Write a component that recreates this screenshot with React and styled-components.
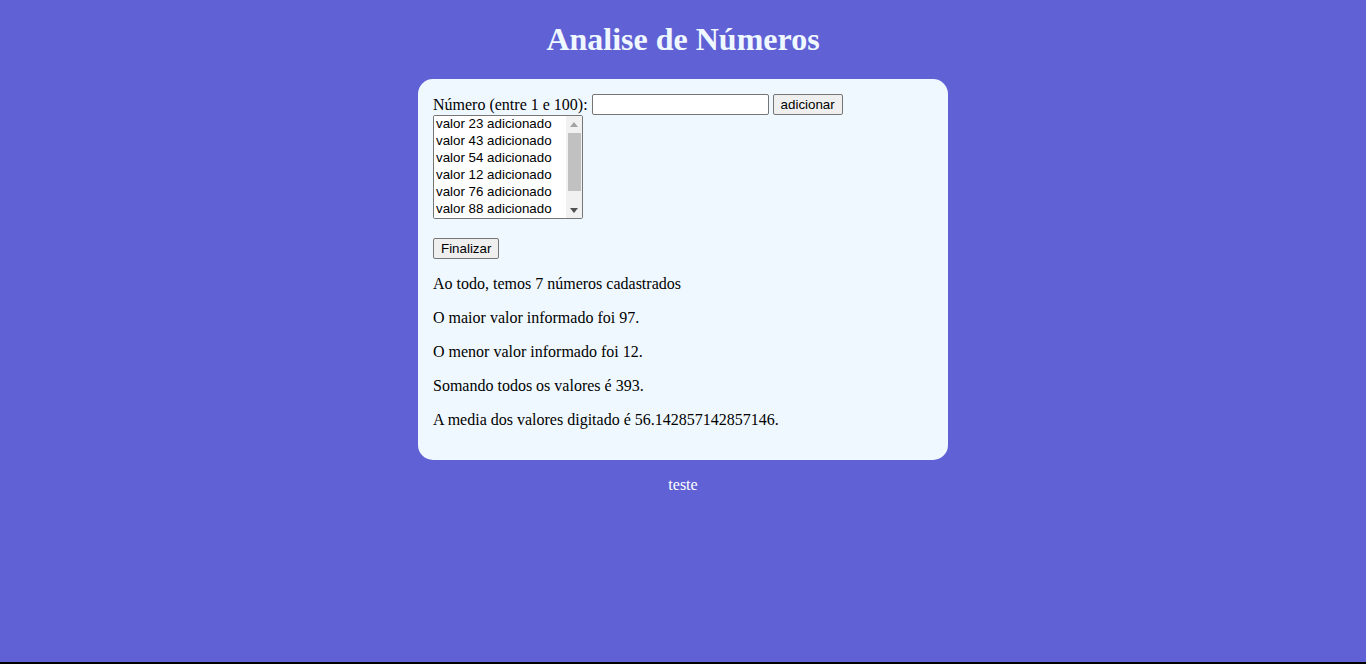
import React from 'react';
import styled, { createGlobalStyle } from 'styled-components';

const valores = [23, 43, 54, 12, 76, 88, 97];

const GlobalStyle = createGlobalStyle`
    html, body {
        margin: 0;
        background-color: #000;
    }
    body {
        font-family: "Liberation Serif", "Times New Roman", serif;
        font-size: 16px;
    }
`;

const Arrow = ({ up, color }) => (
    <svg width="8" height="5" viewBox="0 0 8 5">
        <polygon points={up ? '0,5 8,5 4,0' : '0,0 8,0 4,5'} fill={color} />
    </svg>
);

const Page = () => {
    const soma = valores.reduce((a, b) => a + b, 0);
    const maior = Math.max(...valores);
    const menor = Math.min(...valores);
    const media = soma / valores.length;

    return (
        <StPage>
            <StTitle>Analise de Números</StTitle>
            <StCard>
                <StRow>
                    <span>Número (entre 1 e 100):</span>
                    <StInput type="number" />
                    <StButton>adicionar</StButton>
                </StRow>
                <StSelectWrap>
                    <StSelect size="6">
                        {valores.map((v) => (
                            <option key={v}>valor {v} adicionado</option>
                        ))}
                    </StSelect>
                    {/* barra de rolagem desenhada (o navegador headless esconde a nativa) */}
                    <StScrollbar>
                        <StScrollBtn>
                            <Arrow up color="#a3a3a3" />
                        </StScrollBtn>
                        <StThumb />
                        <StScrollBtn>
                            <Arrow color="#505050" />
                        </StScrollBtn>
                    </StScrollbar>
                </StSelectWrap>
                <StFinal>
                    <StButton>Finalizar</StButton>
                </StFinal>
                <div>
                    <StText>Ao todo, temos {valores.length} números cadastrados</StText>
                    <StText>O maior valor informado foi {maior}.</StText>
                    <StText>O menor valor informado foi {menor}.</StText>
                    <StText>Somando todos os valores é {soma}.</StText>
                    <StText>A media dos valores digitado é {media}.</StText>
                </div>
            </StCard>
            <StFooter>teste</StFooter>
        </StPage>
    );
};

export default function App() {
    return (
        <>
            <GlobalStyle />
            <Page />
        </>
    );
}

const StPage = styled.div`
    display: flow-root;
    min-height: calc(100vh - 2px);
    background-color: #6161d6;
`;

const StTitle = styled.h1`
    margin: 21px 0;
    text-align: center;
    font-size: 32px;
    font-weight: bold;
    color: #f0f8ff;
`;

const StCard = styled.section`
    width: 500px;
    margin: 0 auto;
    padding: 15px;
    background-color: #f0f8ff;
    border-radius: 15px;
`;

const StRow = styled.div`
    display: flex;
    align-items: center;
    gap: 4px;
    height: 21px;
`;

const StInput = styled.input`
    width: 177px;
    height: 21px;
    box-sizing: border-box;
    padding: 1px 2px;
    border: 1px solid #767676;
    border-radius: 2px;
    background: #fff;
    font-family: "Liberation Sans", Arial, sans-serif;
    font-size: 13.333px;
    -moz-appearance: textfield;
    &::-webkit-outer-spin-button,
    &::-webkit-inner-spin-button {
        -webkit-appearance: none;
        margin: 0;
    }
`;

const StButton = styled.button`
    height: 21px;
    box-sizing: border-box;
    padding: 1px 7px;
    border: 1px solid #767676;
    border-radius: 2px;
    background-color: #efefef;
    color: #000;
    font-family: "Liberation Sans", Arial, sans-serif;
    font-size: 13.333px;
    line-height: 17px;
`;

const StSelectWrap = styled.div`
    position: relative;
    width: 150px;
    height: 104px;
`;

const StSelect = styled.select`
    display: block;
    width: 150px;
    height: 104px;
    box-sizing: border-box;
    padding: 0;
    border: 1px solid #767676;
    border-radius: 2px;
    background: #fff;
    font-family: "Liberation Sans", Arial, sans-serif;
    font-size: 13.333px;
    color: #000;
    outline: none;

    option {
        padding: 0 2px;
        line-height: 17px;
        height: 17px;
    }
`;

const StScrollbar = styled.div`
    position: absolute;
    top: 1px;
    right: 1px;
    bottom: 1px;
    width: 16px;
    display: flex;
    flex-direction: column;
    background-color: #f1f1f1;
    pointer-events: none;
`;

const StScrollBtn = styled.div`
    height: 16px;
    display: flex;
    align-items: center;
    justify-content: center;
    flex-shrink: 0;

    &:last-child {
        margin-top: auto;
    }
`;

const StThumb = styled.div`
    height: 58px;
    margin: 1px 1px 0 2px;
    background-color: #c1c1c1;
`;

const StFinal = styled.div`
    margin-top: 19px;
    button {
        display: block;
    }
`;

const StText = styled.p`
    margin: 16px 0;
    line-height: normal;
    color: #000;
`;

const StFooter = styled.p`
    margin: 16px 0;
    text-align: center;
    color: #fff;
`;
